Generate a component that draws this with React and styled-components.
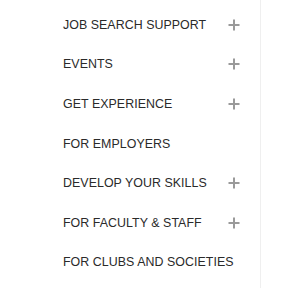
import React from 'react'
import styled, { createGlobalStyle } from 'styled-components'

const GlobalStyle = createGlobalStyle`
  html, body {
    margin: 0;
    padding: 0;
    background: #fff;
  }
  body {
    font-family: "Liberation Sans", Arial, sans-serif;
  }
`

const Sidebar = styled.nav`
  width: 261px;
  min-height: 288px;
  box-sizing: border-box;
  border-right: 1px solid #efefef;
  padding-top: 5px;
`

const Menu = styled.ul`
  list-style: none;
  margin: 0;
  padding: 0 20px 0 63px;
`

const Item = styled.li`
  height: 39.6px;
  display: flex;
  align-items: center;
  justify-content: space-between;
`

const Label = styled.a`
  font-size: 12.4px;
  letter-spacing: 0.05px;
  color: #2a2a2a;
  text-decoration: none;
  text-transform: uppercase;
  white-space: nowrap;
`

const Toggle = styled.button`
  width: 12px;
  height: 12px;
  padding: 0;
  border: 0;
  background: none;
  display: flex;
  cursor: pointer;
`

const Plus = () => (
  <svg width="12" height="12" viewBox="0 0 12 12">
    <path d="M6 0.5v11M0.5 6h11" stroke="#9a9a9a" strokeWidth="2" />
  </svg>
)

const items = [
  { label: 'Job Search Support', sub: true },
  { label: 'Events', sub: true },
  { label: 'Get Experience', sub: true },
  { label: 'For Employers', sub: false },
  { label: 'Develop Your Skills', sub: true },
  { label: 'For Faculty & Staff', sub: true },
  { label: 'For Clubs and Societies', sub: false },
]

const App = () => {
  return (
    <>
      <GlobalStyle />
      <Sidebar>
        <Menu>
          {items.map(item => (
            <Item key={item.label}>
              <Label href="#">{item.label}</Label>
              {item.sub && (
                <Toggle aria-label="Expand">
                  <Plus />
                </Toggle>
              )}
            </Item>
          ))}
        </Menu>
      </Sidebar>
    </>
  )
}

export default App
